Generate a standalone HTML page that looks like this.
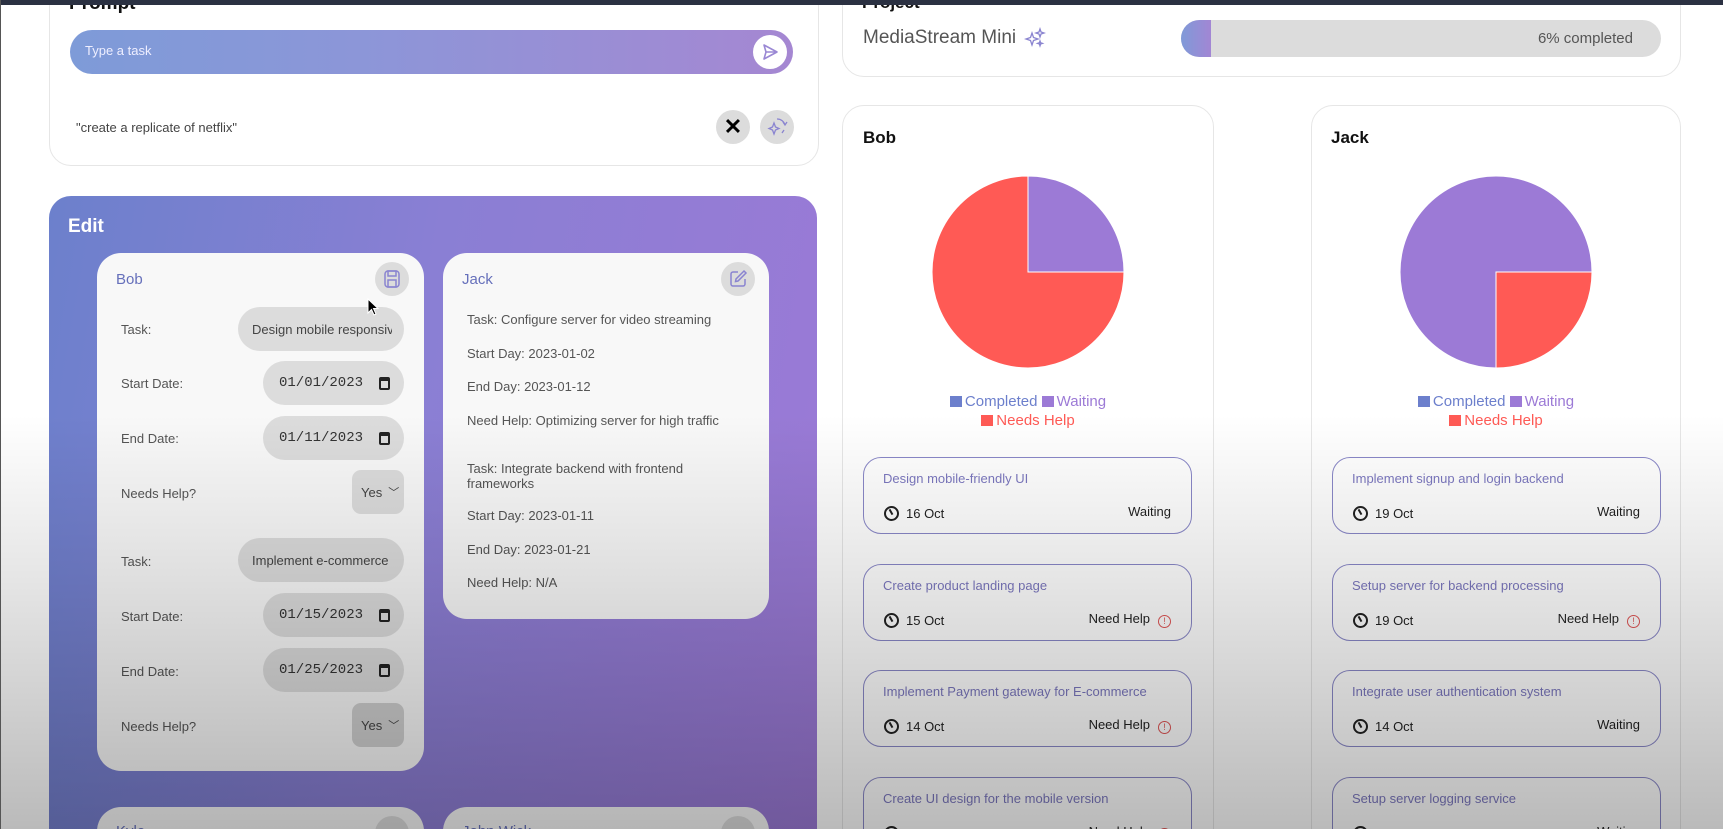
<!DOCTYPE html>
<html style="width:1723px;height:829px;overflow:hidden"><head><meta charset="utf-8"><style>
*{box-sizing:border-box;margin:0;padding:0}
body{width:1723px;height:829px;overflow:hidden;background:#fff;font-family:"Liberation Sans",sans-serif}
#wrap{position:relative;width:1723px;height:829px;overflow:hidden}
.abs{position:absolute}
.card{position:absolute;background:#fff;border:1px solid #e6e6e6;border-radius:22px}
.lbl{position:absolute;left:24px;font-size:13px;color:#555}
.pill{position:absolute;background:#dcdcdc;border-radius:22px;font-size:13px;color:#444;display:flex;align-items:center}
.date{font-family:"Liberation Mono",monospace;font-size:14px;color:#333;padding-left:16px}
.cal{position:absolute;right:14px;top:50%;width:11px;height:13px;margin-top:-6px;border:2px solid #222;border-top-width:4px;border-radius:2px}
.jt{position:absolute;left:24px;font-size:13px;color:#555;line-height:15px}
.task{position:absolute;left:20px;width:329px;height:77px;border:1.5px solid #8a88c8;border-radius:18px;background:rgba(255,255,255,.6)}
.task .t{position:absolute;left:19px;top:13px;font-size:13px;color:#7c78bf}
.task .d{position:absolute;left:42px;top:48px;font-size:13px;color:#222}
.task .ck{position:absolute;left:20px;top:48px;width:15px;height:15px;border:2px solid #222;border-radius:50%}
.task .ck:after{content:"";position:absolute;left:4px;top:1px;width:2px;height:6px;background:#222;transform:rotate(-30deg)}
.task .s{position:absolute;right:20px;top:46px;font-size:13px;color:#222}
.task .s i{display:inline-block;width:13px;height:13px;border:1.3px solid #e05555;border-radius:50%;color:#e05555;font-size:9px;font-style:normal;text-align:center;line-height:11px;margin-left:8px;vertical-align:-1px}
.leg{position:absolute;width:100%;text-align:center;font-size:15px;line-height:19px}
.sq{display:inline-block;width:12px;height:11px;margin-right:3px;vertical-align:-1px}
.circ{position:absolute;width:34px;height:34px;border-radius:50%;background:#dcdcdc;display:flex;align-items:center;justify-content:center}
</style></head><body><div id="wrap">
<div class="abs" style="left:0;top:0;width:1723px;height:5px;background:#2b3142;z-index:5"></div>
<div class="abs" style="left:0;top:0;width:1px;height:829px;background:#555;z-index:5"></div>

<div class="card" style="left:49px;top:-30px;width:770px;height:196px">
  <div class="abs" style="left:19px;top:22px;font-size:19px;font-weight:bold;color:#111">Prompt</div>
  <div class="abs" style="left:20px;top:59px;width:723px;height:44px;border-radius:22px;background:linear-gradient(90deg,#7e9bd8,#8c96d8 40%,#a587d2)">
    <div class="abs" style="left:15px;top:13px;font-size:13px;color:#eef">Type a task</div>
    <div class="abs" style="right:6px;top:5px;width:34px;height:34px;border-radius:50%;background:#fff">
      <svg width="34" height="34" viewBox="0 0 34 34"><path d="M11 10 L24 17 L11 24 L13 17 Z M13 17 H24" fill="none" stroke="#9a88d4" stroke-width="1.6" stroke-linejoin="round"/></svg>
    </div>
  </div>
  <div class="abs" style="left:26px;top:149px;font-size:13px;color:#444">"create a replicate of netflix"</div>
  <div class="circ" style="left:666px;top:139px;font-size:22px;color:#000;font-weight:bold">✕</div>
  <div class="circ" style="left:710px;top:139px"><svg width="24" height="24" viewBox="0 0 24 24" fill="none" stroke="#8a84d0" stroke-width="1.3"><path d="M9 8 L10.5 12 L14 13.5 L10.5 15 L9 19 L7.5 15 L4 13.5 L7.5 12 Z"/><path d="M12 4 A8 8 0 0 1 20 10 M18 7 L20 10 L22 7 M17 18 L19 15"/></svg></div>
</div>

<div class="abs" style="left:49px;top:196px;width:768px;height:680px;border-radius:22px;background:linear-gradient(100deg,#6c80cc 0%,#8a7fd4 45%,#9c79d6 100%)">
  <div class="abs" style="left:19px;top:20px;font-size:19px;font-weight:bold;color:#fff">Edit</div>
</div>

<div class="abs" style="left:97px;top:253px;width:327px;height:518px;border-radius:24px;background:#f8f8f8">
  <div class="abs" style="left:19px;top:18px;font-size:15px;color:#6670bb">Bob</div>
  <div class="circ" style="left:278px;top:9px"><svg width="20" height="20" viewBox="0 0 20 20" fill="none" stroke="#8a84d0" stroke-width="1.5"><rect x="3" y="2" width="14" height="16" rx="3"/><rect x="6" y="2" width="8" height="5"/><rect x="6" y="11" width="8" height="7"/></svg></div>
  <div class="lbl" style="top:69px">Task:</div>
  <div class="pill" style="left:141px;top:54px;width:166px;height:44px;padding-left:14px;overflow:hidden;white-space:nowrap"><span style="display:inline-block;width:140px;overflow:hidden">Design mobile responsive</span></div>
  <div class="lbl" style="top:123px">Start Date:</div>
  <div class="pill date" style="left:166px;top:108px;width:141px;height:44px">01/01/2023<span class="cal"></span></div>
  <div class="lbl" style="top:178px">End Date:</div>
  <div class="pill date" style="left:166px;top:163px;width:141px;height:44px">01/11/2023<span class="cal"></span></div>
  <div class="lbl" style="top:233px">Needs Help?</div>
  <div class="pill" style="left:255px;top:217px;width:52px;height:44px;border-radius:9px;padding-left:9px">Yes <span style="margin-left:6px;font-size:11px">﹀</span></div>
  <div class="lbl" style="top:301px">Task:</div>
  <div class="pill" style="left:141px;top:285px;width:166px;height:44px;padding-left:14px;white-space:nowrap;overflow:hidden">Implement e-commerce</div>
  <div class="lbl" style="top:356px">Start Date:</div>
  <div class="pill date" style="left:166px;top:340px;width:141px;height:44px">01/15/2023<span class="cal"></span></div>
  <div class="lbl" style="top:411px">End Date:</div>
  <div class="pill date" style="left:166px;top:395px;width:141px;height:44px">01/25/2023<span class="cal"></span></div>
  <div class="lbl" style="top:466px">Needs Help?</div>
  <div class="pill" style="left:255px;top:450px;width:52px;height:44px;border-radius:9px;padding-left:9px;background:#d0d0d0">Yes <span style="margin-left:6px;font-size:11px">﹀</span></div>
</div>

<div class="abs" style="left:443px;top:253px;width:326px;height:366px;border-radius:24px;background:#f8f8f8">
  <div class="abs" style="left:19px;top:18px;font-size:15px;color:#6670bb">Jack</div>
  <div class="circ" style="left:278px;top:9px"><svg width="20" height="20" viewBox="0 0 20 20" fill="none" stroke="#8a84d0" stroke-width="1.5"><path d="M10 3 H5 a2 2 0 0 0 -2 2 v10 a2 2 0 0 0 2 2 h10 a2 2 0 0 0 2 -2 v-5"/><path d="M16 2 L18 4 L10 12 L7.5 12.5 L8 10 Z"/></svg></div>
  <div class="jt" style="top:59px">Task: Configure server for video streaming</div>
  <div class="jt" style="top:93px">Start Day: 2023-01-02</div>
  <div class="jt" style="top:126px">End Day: 2023-01-12</div>
  <div class="jt" style="top:160px">Need Help: Optimizing server for high traffic</div>
  <div class="jt" style="top:208px;width:270px">Task: Integrate backend with frontend frameworks</div>
  <div class="jt" style="top:255px">Start Day: 2023-01-11</div>
  <div class="jt" style="top:289px">End Day: 2023-01-21</div>
  <div class="jt" style="top:322px">Need Help: N/A</div>
</div>
<div class="abs" style="left:97px;top:807px;width:327px;height:80px;border-radius:24px;background:#f8f8f8"><div class="abs" style="left:19px;top:16px;font-size:15px;color:#6670bb">Kyle</div><div class="circ" style="left:278px;top:9px"></div></div>
<div class="abs" style="left:443px;top:807px;width:326px;height:80px;border-radius:24px;background:#f8f8f8"><div class="abs" style="left:19px;top:16px;font-size:15px;color:#6670bb">John Wick</div><div class="circ" style="left:278px;top:9px"></div></div>

<div class="card" style="left:842px;top:-30px;width:839px;height:107px">
  <div class="abs" style="left:19px;top:22px;font-size:17px;font-weight:bold;color:#111">Project</div>
  <div class="abs" style="left:20px;top:56px;font-size:19px;color:#555">MediaStream Mini</div>
  <svg class="abs" style="left:181px;top:56px" width="22" height="22" viewBox="0 0 22 22" fill="none" stroke="#8a84d0" stroke-width="1.3"><path d="M8 6 L9.5 10.5 L14 12 L9.5 13.5 L8 18 L6.5 13.5 L2 12 L6.5 10.5 Z"/><path d="M16 2 L17 5 L20 6 L17 7 L16 10 L15 7 L12 6 L15 5 Z"/><path d="M16 14 l.6 1.8 1.8.6 -1.8.6 -.6 1.8 -.6 -1.8 -1.8 -.6 1.8 -.6z"/></svg>
  <div class="abs" style="left:338px;top:49px;width:480px;height:37px;border-radius:19px;background:#dcdcdc;overflow:hidden">
    <div class="abs" style="left:0;top:0;width:30px;height:37px;background:linear-gradient(90deg,#7f9ad8,#a286d4)"></div>
    <div class="abs" style="right:28px;top:10px;font-size:15px;color:#555">6% completed</div>
  </div>
</div>

<div class="card" style="left:842px;top:105px;width:372px;height:800px">
  <div class="abs" style="left:20px;top:22px;font-size:17px;font-weight:bold;color:#111">Bob</div>
  <svg class="abs" style="left:88px;top:69px" width="194" height="194" viewBox="0 0 194 194"><path d="M97 97 L97 1 A96 96 0 0 1 193 97 Z" fill="#9c7ad6" stroke="#fff"/><path d="M97 97 L193 97 A96 96 0 1 1 97 1 Z" fill="#ff5a55" stroke="#fff"/></svg>
  <div class="leg" style="top:286px"><span class="sq" style="background:#6c7fcc"></span><span style="color:#6c7fcc">Completed</span> <span class="sq" style="background:#9c7ad6"></span><span style="color:#9c7ad6">Waiting</span><br><span class="sq" style="background:#ff5a55"></span><span style="color:#ff5a55">Needs Help</span></div>
  <div class="task" style="top:351px"><div class="t">Design mobile-friendly UI</div><div class="ck"></div><div class="d">16 Oct</div><div class="s">Waiting</div></div>
  <div class="task" style="top:458px"><div class="t">Create product landing page</div><div class="ck"></div><div class="d">15 Oct</div><div class="s">Need Help<i>!</i></div></div>
  <div class="task" style="top:564px"><div class="t">Implement Payment gateway for E-commerce</div><div class="ck"></div><div class="d">14 Oct</div><div class="s">Need Help<i>!</i></div></div>
  <div class="task" style="top:671px"><div class="t">Create UI design for the mobile version</div><div class="ck"></div><div class="d">13 Oct</div><div class="s">Need Help<i>!</i></div></div>
</div>

<div class="card" style="left:1311px;top:105px;width:370px;height:800px">
  <div class="abs" style="left:19px;top:22px;font-size:17px;font-weight:bold;color:#111">Jack</div>
  <svg class="abs" style="left:87px;top:69px" width="194" height="194" viewBox="0 0 194 194"><path d="M97 97 L193 97 A96 96 0 0 1 97 193 Z" fill="#ff5a55" stroke="#fff"/><path d="M97 97 L97 193 A96 96 0 1 1 193 97 Z" fill="#9c7ad6" stroke="#fff"/></svg>
  <div class="leg" style="top:286px"><span class="sq" style="background:#6c7fcc"></span><span style="color:#6c7fcc">Completed</span> <span class="sq" style="background:#9c7ad6"></span><span style="color:#9c7ad6">Waiting</span><br><span class="sq" style="background:#ff5a55"></span><span style="color:#ff5a55">Needs Help</span></div>
  <div class="task" style="top:351px"><div class="t">Implement signup and login backend</div><div class="ck"></div><div class="d">19 Oct</div><div class="s">Waiting</div></div>
  <div class="task" style="top:458px"><div class="t">Setup server for backend processing</div><div class="ck"></div><div class="d">19 Oct</div><div class="s">Need Help<i>!</i></div></div>
  <div class="task" style="top:564px"><div class="t">Integrate user authentication system</div><div class="ck"></div><div class="d">14 Oct</div><div class="s">Waiting</div></div>
  <div class="task" style="top:671px"><div class="t">Setup server logging service</div><div class="ck"></div><div class="d">13 Oct</div><div class="s">Waiting</div></div>
</div>

<div class="abs" style="left:0;top:0;width:1723px;height:829px;pointer-events:none;z-index:4;background:linear-gradient(180deg,rgba(0,0,0,0) 0%,rgba(0,0,0,0) 50%,rgba(0,0,0,.1) 70%,rgba(0,0,0,.27) 100%)"></div>
<svg class="abs" style="left:367px;top:298px;z-index:6" width="14" height="20" viewBox="0 0 14 20"><path d="M1 1 L1 15 L4.5 11.5 L7 17 L9 16 L6.5 10.5 L11 10.5 Z" fill="#000" stroke="#fff" stroke-width="1"/></svg>
</div></body></html>
